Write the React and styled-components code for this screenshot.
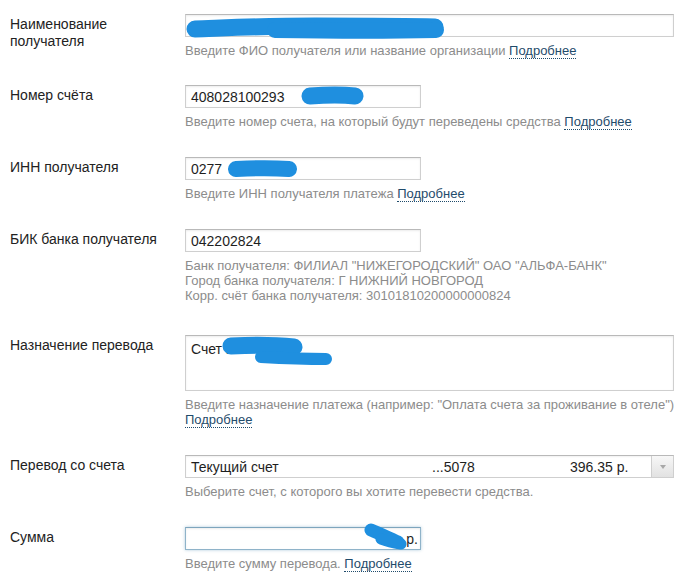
import React from 'react'
import styled, { createGlobalStyle } from 'styled-components'

const GlobalStyle = createGlobalStyle`
  html, body {
    margin: 0;
    padding: 0;
    background: #fff;
  }
  body {
    font-family: "Liberation Sans", Arial, sans-serif;
    color: #222;
  }
`

const Form = styled.div`
  width: 700px;
  height: 581px;
  box-sizing: border-box;
  padding: 14px 26px 0 10px;
  overflow: hidden;
`

const Row = styled.div`
  display: grid;
  grid-template-columns: 175px 1fr;
  margin-bottom: ${({ $space }) => $space || 28}px;
`

const Label = styled.div`
  padding-top: 2px;
  font-size: 14px;
  line-height: 17px;
  color: #222;
`

const Field = styled.div`
  position: relative;
  width: ${({ $narrow }) => ($narrow ? '236px' : '100%')};
`

const Input = styled.div`
  box-sizing: border-box;
  height: ${({ $tall }) => ($tall ? 56 : 23)}px;
  padding: ${({ $tall, $right }) => ($tall ? '5px 5px' : $right ? '0 2px 0 5px' : '0 5px')};
  display: flex;
  align-items: ${({ $tall }) => ($tall ? 'flex-start' : 'center')};
  justify-content: ${({ $right }) => ($right ? 'flex-end' : 'flex-start')};
  border: 1px solid ${({ $focus }) => ($focus ? '#8fb3c9' : '#cfcfcf')};
  border-top-color: ${({ $focus }) => ($focus ? '#7ea5bd' : '#b9b9b9')};
  box-shadow: ${({ $focus }) =>
    $focus
      ? '0 0 3px rgba(80, 140, 180, 0.45), inset 0 1px 2px rgba(0,0,0,0.08)'
      : 'inset 0 1px 2px rgba(0,0,0,0.08)'};
  background: #fff;
  font-size: 14px;
  line-height: 16px;
  color: #1e1e1e;
`

const Select = styled.div`
  box-sizing: border-box;
  height: 23px;
  display: grid;
  grid-template-columns: 241px 138px 1fr 22px;
  align-items: center;
  border: 1px solid #cfcfcf;
  border-top-color: #b9b9b9;
  box-shadow: inset 0 1px 2px rgba(0,0,0,0.06);
  background: #fff;
  font-size: 14px;
  color: #1e1e1e;
  padding-left: 5px;
`

const SelectText = styled.span`
  white-space: nowrap;
`

const ArrowButton = styled.div`
  height: 100%;
  display: flex;
  align-items: center;
  justify-content: center;
  border-left: 1px solid #cfcfcf;
  background: linear-gradient(#f7f7f7, #e2e2e2);
`

const Arrow = styled.span`
  width: 0;
  height: 0;
  border-left: 3px solid transparent;
  border-right: 3px solid transparent;
  border-top: 4px solid #a8a8a8;
  margin-top: 1px;
`

const Hints = styled.div`
  margin-top: 6px;
  font-size: 13px;
  line-height: 15px;
  color: #8c8c8c;
`

const Line = styled.div`
  white-space: nowrap;
`

const More = styled.span`
  color: #1f4b6b;
  border-bottom: 1px dotted #1f4b6b;
`

// синие «замазки» поверх скрытых данных
const Scribble = styled.svg`
  position: absolute;
  left: 0;
  top: 0;
  overflow: visible;
  pointer-events: none;
  filter: blur(0.5px);
`

const Blot = ({ lines }) => (
  <Scribble width="10" height="10">
    {lines.map(([d, w], i) => (
      <path
        key={i}
        d={d}
        fill="none"
        stroke="#1f8fdf"
        strokeWidth={w}
        strokeLinecap="round"
        strokeLinejoin="round"
      />
    ))}
  </Scribble>
)

export default function App() {
  return (
    <>
      <GlobalStyle />
      <Form>
        <Row $space={27}>
          <Label>
            Наименование
            <br />
            получателя
          </Label>
          <div>
            <Field>
              <Input />
              <Blot
                lines={[
                  ['M10 15 C 40 14, 80 12, 130 12 S 220 12, 250 13', 17],
                  ['M90 16 C 150 17, 210 17, 251 16', 16],
                ]}
              />
            </Field>
            <Hints>
              <Line>
                Введите ФИО получателя или название организации <More>Подробнее</More>
              </Line>
            </Hints>
          </div>
        </Row>

        <Row>
          <Label>Номер счёта</Label>
          <div>
            <Field $narrow>
              <Input>408028100293</Input>
              <Blot lines={[['M125 11 C 140 10, 160 10, 170 11', 17]]} />
            </Field>
            <Hints>
              <Line>
                Введите номер счета, на который будут переведены средства{' '}
                <More>Подробнее</More>
              </Line>
            </Hints>
          </div>
        </Row>

        <Row>
          <Label>ИНН получателя</Label>
          <div>
            <Field $narrow>
              <Input>0277</Input>
              <Blot lines={[['M51 12 C 70 11, 90 11, 104 12', 16]]} />
            </Field>
            <Hints>
              <Line>
                Введите ИНН получателя платежа <More>Подробнее</More>
              </Line>
            </Hints>
          </div>
        </Row>

        <Row $space={32}>
          <Label>БИК банка получателя</Label>
          <div>
            <Field $narrow>
              <Input>042202824</Input>
            </Field>
            <Hints>
              <Line>Банк получателя: ФИЛИАЛ "НИЖЕГОРОДСКИЙ" ОАО "АЛЬФА-БАНК"</Line>
              <Line>Город банка получателя: Г НИЖНИЙ НОВГОРОД</Line>
              <Line>Корр. счёт банка получателя: 30101810200000000824</Line>
            </Hints>
          </div>
        </Row>

        <Row>
          <Label>Назначение перевода</Label>
          <div>
            <Field>
              <Input $tall>Счет №</Input>
              <Blot
                lines={[
                  ['M46 11 C 65 10, 90 10, 109 12', 17],
                  ['M76 22 C 95 23, 120 24, 141 24', 12],
                ]}
              />
            </Field>
            <Hints>
              <Line>
                Введите назначение платежа (например: "Оплата счета за проживание в отеле")
              </Line>
              <Line>
                <More>Подробнее</More>
              </Line>
            </Hints>
          </div>
        </Row>

        <Row>
          <Label>Перевод со счета</Label>
          <div>
            <Field>
              <Select>
                <SelectText>Текущий счет</SelectText>
                <SelectText>...5078</SelectText>
                <SelectText>396.35 р.</SelectText>
                <ArrowButton>
                  <Arrow />
                </ArrowButton>
              </Select>
            </Field>
            <Hints>
              <Line>Выберите счет, с которого вы хотите перевести средства.</Line>
            </Hints>
          </div>
        </Row>

        <Row>
          <Label>Сумма</Label>
          <div>
            <Field $narrow>
              <Input $focus $right>
                р.
              </Input>
              <Blot
                lines={[
                  ['M186 3 C 196 7, 206 12, 213 15', 13],
                  ['M196 12 C 204 15, 210 16, 216 17', 11],
                ]}
              />
            </Field>
            <Hints>
              <Line>
                Введите сумму перевода. <More>Подробнее</More>
              </Line>
            </Hints>
          </div>
        </Row>
      </Form>
    </>
  )
}
